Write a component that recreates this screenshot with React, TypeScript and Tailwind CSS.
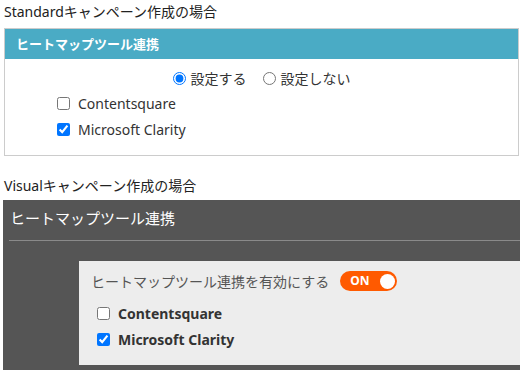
import React from "react";

const font = { fontFamily: '"Noto Sans", "Noto Sans CJK JP", sans-serif' };

function Check({ label, checked, bold }: { label: string; checked?: boolean; bold?: boolean }) {
  return (
    <label className="flex items-center h-[26px]">
      <input type="checkbox" defaultChecked={checked} className="m-0 w-[13px] h-[13px]" />
      <span className={bold ? "ml-[8px] text-[14px] font-bold text-[#333]" : "ml-[8px] text-[14px] text-[#333]"}>
        {label}
      </span>
    </label>
  );
}

export default function App() {
  return (
    <div className="w-[520px] h-[370px] overflow-hidden bg-white text-[#222]" style={font}>
      {/* Standard */}
      <div className="h-[28px] pl-[4px] text-[14px] leading-[24px]">Standardキャンペーン作成の場合</div>
      <div className="ml-[4px] w-[515px] border border-[#cccccc]">
        <div className="h-[30px] bg-[#4aabc5] px-[11px] text-[13px] font-bold leading-[30px] text-white">
          ヒートマップツール連携
        </div>
        <div className="pt-[9px] pb-[13px]">
          <div className="flex h-[20px] items-center justify-center gap-[16px] text-[14px] text-[#333]">
            <label className="flex items-center">
              <input type="radio" name="std" defaultChecked className="m-0 w-[13px] h-[13px]" />
              <span className="ml-[5px]">設定する</span>
            </label>
            <label className="flex items-center">
              <input type="radio" name="std" className="m-0 w-[13px] h-[13px]" />
              <span className="ml-[5px]">設定しない</span>
            </label>
          </div>
          <div className="mt-[2px] pl-[52px]">
            <Check label="Contentsquare" />
            <Check label="Microsoft Clarity" checked />
          </div>
        </div>
      </div>

      {/* Visual */}
      <div className="mt-[19px] h-[25px] pl-[4px] text-[14px] leading-[22px]">Visualキャンペーン作成の場合</div>
      <div className="ml-[3px] h-[200px] bg-[#555555] pt-[6px]">
        <div className="px-[7px] text-[15px] leading-[24px] text-white">ヒートマップツール連携</div>
        <div className="ml-[6px] mt-[10px] h-px bg-[#8a8a8a]" />
        <div className="ml-[76px] mt-[20px] h-[104px] bg-[#ededed] pt-[10px]">
          <div className="flex h-[20px] items-center pl-[12px]">
            <span className="text-[14px] text-[#555]">ヒートマップツール連携を有効にする</span>
            <div className="ml-[11px] flex h-[20px] w-[57px] items-center justify-between rounded-full bg-[#ff5a00] pl-[10px] pr-[2px]">
              <span className="text-[12px] font-bold text-white">ON</span>
              <span className="h-[15px] w-[15px] rounded-full bg-white" />
            </div>
          </div>
          <div className="mt-[9px] pl-[18px]">
            <Check label="Contentsquare" bold />
            <Check label="Microsoft Clarity" checked bold />
          </div>
        </div>
      </div>
    </div>
  );
}
